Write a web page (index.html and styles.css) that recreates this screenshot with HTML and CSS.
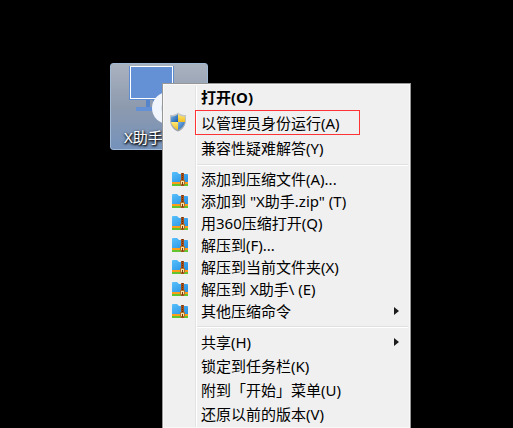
FILE: index.html
```html
<!DOCTYPE html>
<html lang="zh-CN">
<head>
    <meta charset="UTF-8">
    <meta name="viewport" content="width=device-width, initial-scale=1.0">
    <title>X助手</title>
    <link rel="stylesheet" href="styles.css">
</head>
<body>
    <svg class="defs" aria-hidden="true">
        <defs>
            <linearGradient id="folderFill" x1="0" y1="0" x2="1" y2="1">
                <stop offset="0" stop-color="#58c0fb"/>
                <stop offset="1" stop-color="#2590e4"/>
            </linearGradient>
            <linearGradient id="shieldBlue" x1="0" y1="0" x2="1" y2="1">
                <stop offset="0" stop-color="#7db4e8"/>
                <stop offset="1" stop-color="#1559a8"/>
            </linearGradient>
            <linearGradient id="shieldGold" x1="0" y1="0" x2="0" y2="1">
                <stop offset="0" stop-color="#ffe878"/>
                <stop offset="1" stop-color="#f2bd1c"/>
            </linearGradient>
            <linearGradient id="shieldRim" x1="0" y1="0" x2="0" y2="1">
                <stop offset="0" stop-color="#c9cdd0"/>
                <stop offset="1" stop-color="#9aa1a6"/>
            </linearGradient>
        </defs>
        <symbol id="zip" viewBox="0 0 16 14">
            <path d="M0 1Q0 0 1 0H5L7 2H15Q16 2 16 3V10H0Z" fill="url(#folderFill)"/>
            <rect y="10" width="16" height="2" fill="#ff9d18"/>
            <rect y="12" width="16" height="2" fill="#62c52f"/>
            <rect x="9" y="1" width="3" height="13" fill="#a8501c"/>
            <path d="M10 1h1v1h-1zM10 3h1v1h-1zM10 5h1v1h-1zM10 7h1v1h-1z" fill="#653010"/>
            <rect x="8" y="8" width="5" height="5" fill="#b5722c"/>
            <rect x="9" y="9" width="3" height="3" fill="#ffe0a0"/>
            <rect x="10" y="10" width="1" height="3" fill="#6f3c12"/>
        </symbol>
    </svg>

    <main class="desktop">
        <a class="shortcut" href="#">
            <svg class="shortcut-icon" width="54" height="60" viewBox="0 0 54 60" aria-hidden="true">
                <path d="M17 34h4v9h-4zM24 34h4v9h-4z" fill="#5684ca"/>
                <rect x="7" y="42" width="32" height="4" fill="#6491d6"/>
                <rect x="0" y="1" width="45" height="34" fill="#5f8cce"/>
                <rect x="1.5" y="1.5" width="42" height="32" fill="#6491d6" stroke="#fff"/>
                <circle cx="39" cy="43" r="16" fill="#f1f6fc"/>
                <circle cx="39" cy="43" r="7" fill="#d5dce8"/>
            </svg>
            <span class="shortcut-name">X助手</span>
        </a>

        <div class="menu" role="menu">
            <div class="group">
                <button class="item default" role="menuitem"><span class="icon"></span><span class="label">打开(O)</span></button>
                <button class="item admin" role="menuitem">
                    <span class="icon shield">
                        <svg width="18" height="20" viewBox="0 0 18 20" aria-hidden="true">
                            <path d="M9 0.5C6.5 2.5 4 3 1 3V8C1 13.500 4 17.500 9 19.500C14 17.500 17 13.500 17 8V3C14 3 11.500 2.500 9 0.500Z" fill="url(#shieldRim)"/>
                            <path d="M9 2C7 4 5 4.500 2 4.500V10H9Z" fill="url(#shieldBlue)"/>
                            <path d="M9 2C11 4 13 4.500 16 4.500V10H9Z" fill="url(#shieldGold)"/>
                            <path d="M2 10H9V18C5.500 16.500 3 13.500 2 10Z" fill="url(#shieldGold)"/>
                            <path d="M16 10H9V18C12.500 16.500 15 13.500 16 10Z" fill="url(#shieldBlue)"/>
                        </svg>
                    </span>
                    <span class="label marked">以管理员身份运行(A)</span>
                </button>
                <button class="item third" role="menuitem"><span class="icon"></span><span class="label">兼容性疑难解答(Y)</span></button>
            </div>
            <hr class="separator">
            <div class="group archive">
                <button class="item" role="menuitem"><span class="icon"><svg width="16" height="14"><use href="#zip"/></svg></span><span class="label">添加到压缩文件(A)...</span></button>
                <button class="item" role="menuitem"><span class="icon"><svg width="16" height="14"><use href="#zip"/></svg></span><span class="label">添加到 "X助手.zip" (T)</span></button>
                <button class="item" role="menuitem"><span class="icon"><svg width="16" height="14"><use href="#zip"/></svg></span><span class="label">用360压缩打开(Q)</span></button>
                <button class="item" role="menuitem"><span class="icon"><svg width="16" height="14"><use href="#zip"/></svg></span><span class="label">解压到(F)...</span></button>
                <button class="item" role="menuitem"><span class="icon"><svg width="16" height="14"><use href="#zip"/></svg></span><span class="label">解压到当前文件夹(X)</span></button>
                <button class="item" role="menuitem"><span class="icon"><svg width="16" height="14"><use href="#zip"/></svg></span><span class="label">解压到 X助手\ (E)</span></button>
                <button class="item" role="menuitem" aria-haspopup="true"><span class="icon"><svg width="16" height="14"><use href="#zip"/></svg></span><span class="label">其他压缩命令</span><span class="arrow"></span></button>
            </div>
            <hr class="separator">
            <div class="group">
                <button class="item" role="menuitem" aria-haspopup="true"><span class="icon"></span><span class="label">共享(H)</span><span class="arrow"></span></button>
                <button class="item" role="menuitem"><span class="icon"></span><span class="label">锁定到任务栏(K)</span></button>
                <button class="item" role="menuitem"><span class="icon"></span><span class="label">附到「开始」菜单(U)</span></button>
                <button class="item" role="menuitem"><span class="icon"></span><span class="label">还原以前的版本(V)</span></button>
            </div>
        </div>
    </main>
</body>
</html>
```
FILE: styles.css
```css
* {
    box-sizing: border-box;
}
body {
    margin: 0;
    background-color: #000;
    font-family: "Noto Sans", "Noto Sans CJK SC", sans-serif;
    font-size: 15px;
}
.defs {
    position: absolute;
    width: 0;
    height: 0;
}
.desktop {
    position: relative;
    height: 100vh;
    overflow: hidden;
}

/* Selected desktop shortcut */
.shortcut {
    position: absolute;
    left: 110px;
    top: 63px;
    width: 98px;
    height: 87px;
    padding: 1px 0 0 13px;
    border: 1px solid #9fb9d6;
    border-radius: 3px;
    background: linear-gradient(#a9b2bf, #8d9aae 50%, #7592bb);
    color: #fff;
    text-decoration: none;
}
.shortcut-icon {
    display: block;
    margin-left: 5px;
}
.shortcut-name {
    display: block;
    line-height: 24px;
    text-shadow: 1px 1px 2px #000, 0 1px 3px #000;
}

/* Context menu */
.menu {
    position: absolute;
    left: 162px;
    top: 83px;
    bottom: 0;
    width: 249px;
    padding: 2px;
    border: 1px solid #979797;
    border-bottom: none;
    background: linear-gradient(90deg, #e2e3e3 1px, #fff 1px, #fff 2px, transparent 2px) 32px 2px no-repeat #f0f0f0;
    box-shadow: inset 0 0 0 1px #f8f8f8;
}
.group {
    display: flex;
    flex-direction: column;
}
.item {
    display: flex;
    align-items: center;
    height: 24px;
    padding: 0 0 2px;
    border: none;
    background: none;
    color: #000;
    font: inherit;
    line-height: 20px;
    text-align: left;
    white-space: nowrap;
}
.item:hover {
    background-color: rgba(174, 207, 247, 0.3);
}
.default {
    font-weight: bold;
}
.admin {
    height: 26px;
}
.third {
    height: 25px;
}
.archive .item {
    height: 22px;
}
.icon {
    display: flex;
    justify-content: center;
    width: 30px;
}
.icon svg {
    display: block;
}
.shield {
    padding-right: 4px;
}
.label {
    flex: 1;
    padding-left: 6px;
}
.marked {
    flex: none;
    width: 165px;
    padding: 2px 0 1px 5px;
    border: 1px solid #ff3333;
}
.arrow {
    margin-right: 9px;
    border: 4px solid transparent;
    border-left: 5px solid #1c1c1c;
    border-right: none;
}
.separator {
    margin: 3px 0 3px 32px;
    border: none;
    border-top: 1px solid #e0e0e0;
    border-bottom: 1px solid #fff;
}
```
